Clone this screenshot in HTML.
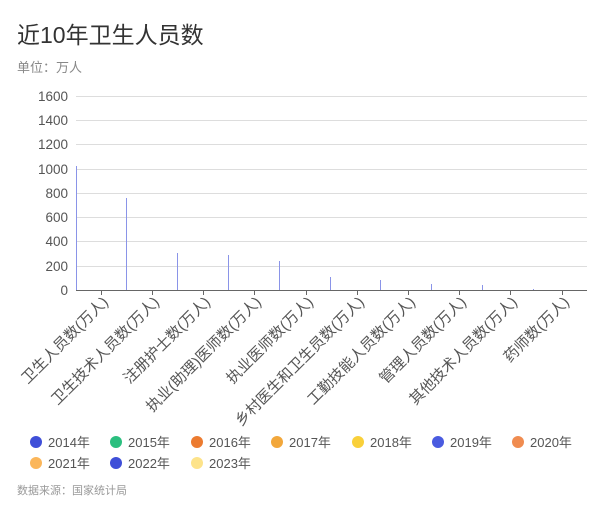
<!DOCTYPE html>
<html><head><meta charset="utf-8"><style>
body{margin:0;width:600px;height:510px;background:#fff;font-family:"Liberation Sans","Noto Sans CJK SC",sans-serif;position:relative;overflow:hidden}
.t{position:absolute;left:17px;top:16px;font-size:23px;color:#333}
.s{position:absolute;left:17px;top:57px;font-size:13px;color:#888}
.f{position:absolute;left:17px;top:482px;font-size:11px;color:#999}
.lg{position:absolute;font-size:13px;color:#555;display:flex;align-items:center}
.lg i{display:inline-block;width:12px;height:12px;border-radius:50%;margin-right:6px}
</style></head><body>
<div class="t">近10年卫生人员数</div>
<div class="s">单位：万人</div>
<svg width="600" height="430" style="position:absolute;left:0;top:0" font-family="Liberation Sans, Noto Sans CJK SC, sans-serif">
<g stroke="#ddd" stroke-width="1">
<line x1="76" x2="587" y1="96.5" y2="96.5"/><line x1="76" x2="587" y1="120.5" y2="120.5"/><line x1="76" x2="587" y1="144.5" y2="144.5"/><line x1="76" x2="587" y1="169.5" y2="169.5"/><line x1="76" x2="587" y1="193.5" y2="193.5"/><line x1="76" x2="587" y1="217.5" y2="217.5"/><line x1="76" x2="587" y1="241.5" y2="241.5"/><line x1="76" x2="587" y1="266.5" y2="266.5"/>
</g>
<g font-size="13.5" fill="#555" text-anchor="end">
<text x="68" y="101">1600</text><text x="68" y="125">1400</text><text x="68" y="149">1200</text><text x="68" y="174">1000</text><text x="68" y="198">800</text><text x="68" y="222">600</text><text x="68" y="246">400</text><text x="68" y="271">200</text><text x="68" y="295">0</text>
</g>
<g stroke="#8a94e8" stroke-width="1">
<line x1="76.5" x2="76.5" y1="166" y2="290"/><line x1="126.5" x2="126.5" y1="198" y2="290"/><line x1="177.5" x2="177.5" y1="253" y2="290"/><line x1="228.5" x2="228.5" y1="255" y2="290"/><line x1="279.5" x2="279.5" y1="261" y2="290"/><line x1="330.5" x2="330.5" y1="277" y2="290"/><line x1="380.5" x2="380.5" y1="280" y2="290"/><line x1="431.5" x2="431.5" y1="284" y2="290"/><line x1="482.5" x2="482.5" y1="285" y2="290"/><line x1="533.5" x2="533.5" y1="289" y2="290"/>
</g>
<line x1="76" x2="587" y1="290.5" y2="290.5" stroke="#666"/>
<g stroke="#666"><line x1="101.5" x2="101.5" y1="290" y2="295"/><line x1="152.5" x2="152.5" y1="290" y2="295"/><line x1="203.5" x2="203.5" y1="290" y2="295"/><line x1="254.5" x2="254.5" y1="290" y2="295"/><line x1="306.5" x2="306.5" y1="290" y2="295"/><line x1="357.5" x2="357.5" y1="290" y2="295"/><line x1="408.5" x2="408.5" y1="290" y2="295"/><line x1="459.5" x2="459.5" y1="290" y2="295"/><line x1="510.5" x2="510.5" y1="290" y2="295"/><line x1="562.5" x2="562.5" y1="290" y2="295"/></g>
<g font-size="15" fill="#555" text-anchor="end">
<text transform="translate(109,303) rotate(-45)">卫生人员数(万人)</text>
<text transform="translate(160,303) rotate(-45)">卫生技术人员数(万人)</text>
<text transform="translate(211,303) rotate(-45)">注册护士数(万人)</text>
<text transform="translate(262,303) rotate(-45)">执业(助理)医师数(万人)</text>
<text transform="translate(314,303) rotate(-45)">执业医师数(万人)</text>
<text transform="translate(365,303) rotate(-45)">乡村医生和卫生员数(万人)</text>
<text transform="translate(416,303) rotate(-45)">工勤技能人员数(万人)</text>
<text transform="translate(467,303) rotate(-45)">管理人员数(万人)</text>
<text transform="translate(518,303) rotate(-45)">其他技术人员数(万人)</text>
<text transform="translate(570,303) rotate(-45)">药师数(万人)</text>
</g>
</svg>
<div class="lg" style="left:30px;top:432px"><i style="background:#3f4fd8"></i>2014年</div>
<div class="lg" style="left:110px;top:432px"><i style="background:#2bbf7f"></i>2015年</div>
<div class="lg" style="left:191px;top:432px"><i style="background:#ec7b30"></i>2016年</div>
<div class="lg" style="left:271px;top:432px"><i style="background:#f2a73b"></i>2017年</div>
<div class="lg" style="left:352px;top:432px"><i style="background:#f9d03a"></i>2018年</div>
<div class="lg" style="left:432px;top:432px"><i style="background:#4a5be0"></i>2019年</div>
<div class="lg" style="left:512px;top:432px"><i style="background:#f08c50"></i>2020年</div>
<div class="lg" style="left:30px;top:453px"><i style="background:#fbb65a"></i>2021年</div>
<div class="lg" style="left:110px;top:453px"><i style="background:#3f4fd8"></i>2022年</div>
<div class="lg" style="left:191px;top:453px"><i style="background:#fde38a"></i>2023年</div>
<div class="f">数据来源：国家统计局</div>
</body></html>
